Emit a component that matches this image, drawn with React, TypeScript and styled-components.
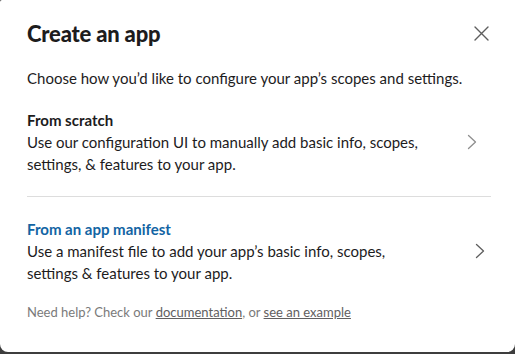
import React from "react";
import styled, { createGlobalStyle } from "styled-components";

const GlobalStyle = createGlobalStyle`
  html, body {
    margin: 0;
    padding: 0;
    background: #3d3d3d;
  }
  body {
    font-family: Lato, "Noto Sans", "Liberation Sans", sans-serif;
    -webkit-font-smoothing: antialiased;
  }
`;

interface Option {
  title: string;
  lines: string[];
  highlight?: boolean;
  chevronShift: number;
}

const options: Option[] = [
  {
    title: "From scratch",
    lines: [
      "Use our configuration UI to manually add basic info, scopes,",
      "settings, & features to your app.",
    ],
    chevronShift: 14,
  },
  {
    title: "From an app manifest",
    lines: [
      "Use a manifest file to add your app’s basic info, scopes,",
      "settings & features to your app.",
    ],
    highlight: true,
    chevronShift: 6,
  },
];

const CloseIcon = () => (
  <svg width="15" height="15" viewBox="0 0 15 15" fill="none">
    <path d="M1 1 L14 14 M14 1 L1 14" stroke="#5e5e5e" strokeWidth="1.4" strokeLinecap="round" />
  </svg>
);

const Chevron = ({ dark }: { dark?: boolean }) => (
  <svg width="10" height="16" viewBox="0 0 10 16" fill="none">
    <path
      d="M1.5 1.5 L8.5 8 L1.5 14.5"
      stroke={dark ? "#5e5e5e" : "#8e8e8e"}
      strokeWidth="1.3"
      strokeLinecap="round"
      strokeLinejoin="round"
    />
  </svg>
);

const App = () => {
  return (
    <>
      <GlobalStyle />
      <Modal>
        <Header>
          <Title>Create an app</Title>
          <CloseButton aria-label="Close">
            <CloseIcon />
          </CloseButton>
        </Header>

        <Intro>Choose how you’d like to configure your app’s scopes and settings.</Intro>

        {options.map((opt, i) => (
          <React.Fragment key={opt.title}>
            {i > 0 && <Divider />}
            <OptionRow $first={i === 0}>
              <OptionText>
                <OptionTitle $highlight={opt.highlight}>{opt.title}</OptionTitle>
                {opt.lines.map((l) => (
                  <OptionLine key={l}>{l}</OptionLine>
                ))}
              </OptionText>
              <ChevronWrap $shift={opt.chevronShift}>
                <Chevron dark={opt.highlight} />
              </ChevronWrap>
            </OptionRow>
          </React.Fragment>
        ))}

        <Help>
          Need help? Check our <HelpLink href="#">documentation</HelpLink>, or{" "}
          <HelpLink href="#">see an example</HelpLink>
        </Help>
      </Modal>
    </>
  );
};

export default App;

const Modal = styled.div`
  width: 515px;
  height: 352px;
  box-sizing: border-box;
  background: #ffffff;
  border-radius: 2px 0 8px 8px;
  padding: 0 24px 0 27px;
  color: #1d1c1d;
  display: flex;
  flex-direction: column;
`;

const Header = styled.div`
  height: 67px;
  display: flex;
  align-items: center;
  justify-content: space-between;
`;

const Title = styled.h1`
  margin: 0;
  font-size: 22px;
  font-weight: 900;
  letter-spacing: -0.2px;
  color: #1d1c1d;
`;

const CloseButton = styled.button`
  border: none;
  background: none;
  padding: 0;
  margin-right: 2px;
  width: 15px;
  height: 15px;
  display: flex;
  cursor: pointer;
`;

const Intro = styled.p`
  margin: 0;
  font-size: 15px;
  line-height: 22px;
  color: #1d1c1d;
`;

const OptionRow = styled.div<{ $first?: boolean }>`
  display: flex;
  align-items: center;
  margin-top: ${(p) => (p.$first ? "20px" : "21px")};
`;

const OptionText = styled.div`
  flex: 1;
  display: flex;
  flex-direction: column;
`;

const OptionTitle = styled.div<{ $highlight?: boolean }>`
  font-size: 15px;
  line-height: 22px;
  font-weight: 700;
  color: ${(p) => (p.$highlight ? "#1264a3" : "#1d1c1d")};
`;

const OptionLine = styled.div`
  font-size: 15px;
  line-height: 22px;
  color: #1d1c1d;
`;

const ChevronWrap = styled.div<{ $shift: number }>`
  display: flex;
  margin-right: ${(p) => p.$shift}px;
`;

const Divider = styled.hr`
  border: none;
  border-top: 1px solid #dddddd;
  margin: 21px 0 0;
  height: 0;
`;

const Help = styled.p`
  margin: 19px 0 0;
  font-size: 13px;
  line-height: 18px;
  color: #7a7a7a;
`;

const HelpLink = styled.a`
  color: #616061;
  text-decoration: underline;
`;
